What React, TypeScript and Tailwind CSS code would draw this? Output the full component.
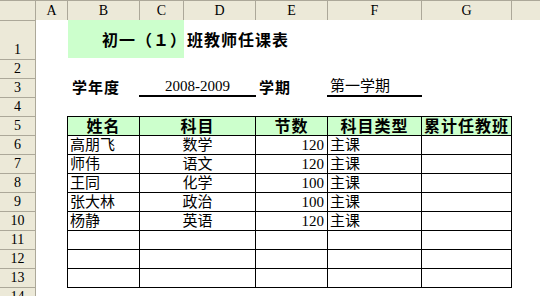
const COLS = [
  { label: "A", w: "w-[32px]" },
  { label: "B", w: "w-[72px]" },
  { label: "C", w: "w-[44px]" },
  { label: "D", w: "w-[72px]" },
  { label: "E", w: "w-[72px]" },
  { label: "F", w: "w-[94px]" },
  { label: "G", w: "w-[90px]" },
]

const ROWS = [
  { n: 1, h: "h-[39px]" },
  ...Array.from({ length: 13 }, (_, i) => ({ n: i + 2, h: "h-[19px]" })),
]

const TEACHERS = [
  { name: "高朋飞", subject: "数学", hours: 120, type: "主课" },
  { name: "师伟", subject: "语文", hours: 120, type: "主课" },
  { name: "王同", subject: "化学", hours: 100, type: "主课" },
  { name: "张大林", subject: "政治", hours: 100, type: "主课" },
  { name: "杨静", subject: "英语", hours: 120, type: "主课" },
  null,
  null,
  null,
]

const HEADERS = ["姓名", "科目", "节数", "科目类型", "累计任教班"]

export default function App() {
  return (
    <div className="h-[296px] w-[540px] overflow-hidden bg-white font-['Liberation_Serif','Noto_Sans_CJK_SC',serif] text-black">
      {/* column letters */}
      <div className="flex h-[20px] border-t border-[#aca899] bg-[#ece9d8] text-[14px] leading-[19px]">
        <div className="w-[36px] shrink-0 border-r border-[#aca899]" />
        {COLS.map((c) => (
          <div
            key={c.label}
            className={`${c.w} shrink-0 border-r border-[#aca899] text-center`}
          >
            {c.label}
          </div>
        ))}
        <div className="flex-1" />
      </div>

      <div className="flex">
        {/* row numbers */}
        <div className="w-[36px] shrink-0 border-r border-[#aca899] bg-[#ece9d8] text-[14px]">
          {ROWS.map((r) => (
            <div
              key={r.n}
              className={`${r.h} flex items-end justify-center border-t border-[#aca899] pb-[1px] leading-[17px]`}
            >
              {r.n}
            </div>
          ))}
        </div>

        {/* sheet */}
        <div className="flex-1">
          <div className="flex h-[39px]">
            <div className="w-[32px] shrink-0" />
            <div className="flex h-[38px] w-[116px] shrink-0 items-center bg-[#ccffcc] pl-[34px] pt-[4px]">
              <span className="whitespace-nowrap text-[16px] font-bold tracking-[1px]">
                初一（１）班教师任课表
              </span>
            </div>
          </div>

          <div className="h-[19px]" />

          <div className="flex h-[19px] items-end text-[15px] leading-[17px]">
            <div className="w-[32px] shrink-0" />
            <div className="w-[71px] shrink-0 pl-[4px] font-bold tracking-[1px]">学年度</div>
            <div className="w-[117px] shrink-0 border-b-2 border-black text-center">
              2008-2009
            </div>
            <div className="w-[71px] shrink-0 pl-[3px] font-bold tracking-[1px]">学期</div>
            <div className="w-[95px] shrink-0 border-b-2 border-black pl-[3px]">第一学期</div>
          </div>

          <div className="h-[19px]" />

          <div className="ml-[31px] grid w-[445px] grid-cols-[72px_116px_72px_94px_90px] border-l border-t border-black text-[15px] leading-[17px]">
            {HEADERS.map((h) => (
              <div
                key={h}
                className="flex h-[19px] items-end justify-center border-b border-r border-black bg-[#ccffcc] text-[16px] font-bold tracking-[1px]"
              >
                {h}
              </div>
            ))}
            {TEACHERS.map((t, i) => (
              <div key={i} className="contents">
                <div className="flex h-[19px] items-end border-b border-r border-black pl-[2px]">
                  {t?.name}
                </div>
                <div className="flex h-[19px] items-end justify-center border-b border-r border-black">
                  {t?.subject}
                </div>
                <div className="flex h-[19px] items-end justify-end border-b border-r border-black pr-[3px]">
                  {t?.hours}
                </div>
                <div className="flex h-[19px] items-end border-b border-r border-black pl-[2px]">
                  {t?.type}
                </div>
                <div className="h-[19px] border-b border-r border-black" />
              </div>
            ))}
          </div>
        </div>
      </div>
    </div>
  )
}
